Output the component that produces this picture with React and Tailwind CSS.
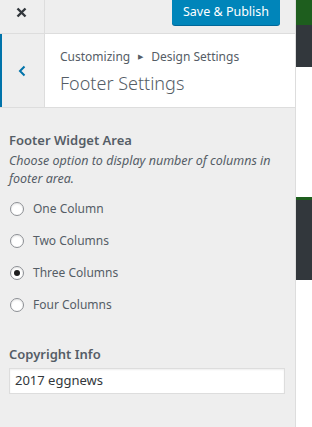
export default function App() {
  const font = { fontFamily: '"Noto Sans", "Open Sans", sans-serif' };
  const opts = ["One Column", "Two Columns", "Three Columns", "Four Columns"];
  return (
    <div className="flex w-[312px] h-[427px] overflow-hidden bg-white" style={font}>
      <div className="w-[296px] shrink-0 h-full bg-[#eeeeee] border-r border-[#dddddd] flex flex-col">
        <div className="h-[34px] shrink-0 flex border-b border-[#dddddd]">
          <div className="w-[45px] border-r border-[#dddddd] flex items-start justify-center pt-[7px] pr-[2px]">
            <svg width="11" height="11" viewBox="0 0 11 11">
              <path d="M1.5 1.5 L9.5 9.5 M9.5 1.5 L1.5 9.5" stroke="#32373c" strokeWidth="2.4" />
            </svg>
          </div>
          <div className="flex-1 flex justify-end pr-[15px]">
            <div className="h-[25px] w-[108px] bg-[#0085ba] rounded-b-[3px] shadow-[0_1px_0_#006799] text-white text-[12.5px] flex items-center justify-center">
              Save &amp; Publish
            </div>
          </div>
        </div>
        <div className="h-[74px] shrink-0 flex bg-white border-b border-[#dddddd]">
          <div className="w-[45px] bg-[#eeeeee] border-l-2 border-[#0073aa] border-r border-r-[#dddddd] flex items-center justify-center pr-[3px]">
            <svg width="10" height="12" viewBox="0 0 10 12">
              <path d="M7.5 1.5 L3 6 L7.5 10.5" stroke="#0073aa" strokeWidth="2" fill="none" />
            </svg>
          </div>
          <div className="flex-1 pl-[15px] pt-[13px] text-[#555d66]">
            <div className="text-[12px] leading-[20px] flex items-center">
              Customizing
              <span className="text-[7px] mx-[8px]">▶</span>
              Design Settings
            </div>
            <div className="text-[18px] font-light leading-[28px] mt-[2px]">Footer Settings</div>
          </div>
        </div>
        <div className="px-[9px] pt-[21px] text-[#555d66]">
          <div className="text-[13px] font-semibold leading-[22px]">Footer Widget Area</div>
          <div className="text-[12.5px] italic leading-[18px] mt-[1px] pr-[4px]">
            Choose option to display number of columns in footer area.
          </div>
          <div className="mt-[11px] flex flex-col gap-[13px]">
            {opts.map((o, i) => (
              <div key={o} className="flex items-center h-[19px]">
                <span className="w-[14px] h-[14px] rounded-full border border-[#8c8f94] bg-white shadow-[inset_0_1px_2px_rgba(0,0,0,0.1)] flex items-center justify-center ml-[1px]">
                  {i === 2 && <span className="w-[6px] h-[6px] rounded-full bg-[#1e1e1e]" />}
                </span>
                <span className="ml-[9px] text-[12px]">{o}</span>
              </div>
            ))}
          </div>
          <div className="mt-[29px] text-[13px] font-semibold leading-[22px]">Copyright Info</div>
          <div className="mt-[3px] h-[26px] w-[276px] bg-white border border-[#dddddd] shadow-[inset_0_1px_2px_rgba(0,0,0,0.07)] flex items-center px-[5px] text-[13px] text-[#32373c]">
            2017 eggnews
          </div>
        </div>
      </div>
      <div className="flex-1 flex flex-col">
        <div className="h-[25px] bg-[#1e5e1e]" />
        <div className="h-[42px] bg-[#32373c]" />
        <div className="h-[130px] bg-white" />
        <div className="h-[3px] bg-[#1e5e1e]" />
        <div className="h-[80px] bg-[#32373c]" />
        <div className="flex-1 bg-white" />
      </div>
    </div>
  );
}
